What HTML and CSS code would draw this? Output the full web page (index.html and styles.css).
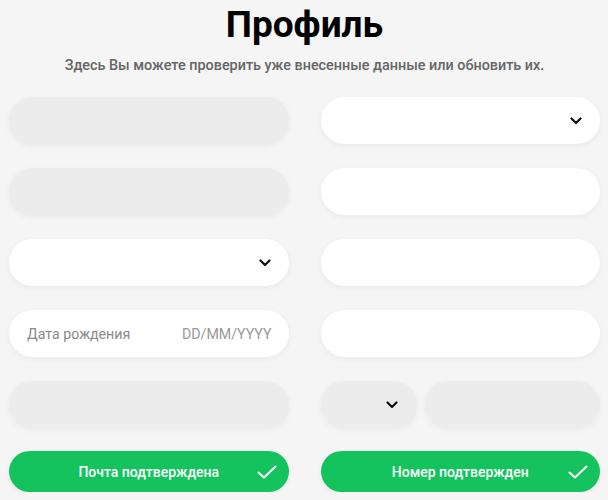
FILE: index.html
```html
<!DOCTYPE html>
<html lang="ru">
<head>
  <meta charset="UTF-8" />
  <meta name="viewport" content="width=device-width, initial-scale=1" />
  <link rel="stylesheet" href="styles.css">
</head>
<body>
  <div class="page">
    <h1 class="title">Профиль</h1>
    <p class="subtitle">Здесь Вы можете проверить уже внесенные данные или обновить их.</p>

    <div class="form-grid">
      <div class="field disabled"></div>
      <div class="field select">
        <svg class="chevron" viewBox="0 0 12 8" width="12" height="8"><path d="M1.5 1.5 L6 6 L10.5 1.5" fill="none" stroke="#111" stroke-width="2.2" stroke-linecap="round" stroke-linejoin="round"/></svg>
      </div>

      <div class="field disabled"></div>
      <div class="field"></div>

      <div class="field select">
        <svg class="chevron" viewBox="0 0 12 8" width="12" height="8"><path d="M1.5 1.5 L6 6 L10.5 1.5" fill="none" stroke="#111" stroke-width="2.2" stroke-linecap="round" stroke-linejoin="round"/></svg>
      </div>
      <div class="field"></div>

      <div class="field date">
        <span class="placeholder">Дата рождения</span>
        <span class="mask">DD/MM/YYYY</span>
      </div>
      <div class="field"></div>

      <div class="field disabled"></div>
      <div class="phone-row">
        <div class="field disabled select code">
          <svg class="chevron" viewBox="0 0 12 8" width="12" height="8"><path d="M1.5 1.5 L6 6 L10.5 1.5" fill="none" stroke="#111" stroke-width="2.2" stroke-linecap="round" stroke-linejoin="round"/></svg>
        </div>
        <div class="field disabled number"></div>
      </div>

      <button class="confirm-btn">
        Почта подтверждена
        <svg class="check" viewBox="0 0 20 14" width="20" height="14"><path d="M1.5 7.5 L7 12.5 L18.5 1.5" fill="none" stroke="#fff" stroke-width="2" stroke-linecap="round" stroke-linejoin="round"/></svg>
      </button>
      <button class="confirm-btn">
        Номер подтвержден
        <svg class="check" viewBox="0 0 20 14" width="20" height="14"><path d="M1.5 7.5 L7 12.5 L18.5 1.5" fill="none" stroke="#fff" stroke-width="2" stroke-linecap="round" stroke-linejoin="round"/></svg>
      </button>
    </div>
  </div>
</body>
</html>
```

FILE: styles.css
```css
html, body {
  margin: 0;
  padding: 0;
  background-color: #f5f5f5;
  font-family: Roboto, "Noto Sans", sans-serif;
  overflow: hidden;
}

.page {
  padding: 3px 8px 0 9px;
}

.title {
  margin: 0;
  font-size: 37px;
  font-weight: 700;
  line-height: 43px;
  color: #000;
  text-align: center;
}

.subtitle {
  margin: 10px 0 0;
  font-size: 14.4px;
  font-weight: 500;
  line-height: 20px;
  color: #666;
  text-align: center;
}

.form-grid {
  display: grid;
  grid-template-columns: 1fr 1fr;
  column-gap: 32px;
  row-gap: 24px;
  margin-top: 21px;
}

.field {
  height: 47px;
  border-radius: 24px;
  background-color: #fff;
  box-shadow: 0 2px 6px rgba(0,0,0,0.05);
  display: flex;
  align-items: center;
  justify-content: flex-end;
  padding: 0 18px;
  box-sizing: border-box;
}

.field.disabled {
  background-color: #ececec;
}

.field.select {
  padding-right: 18px;
}

.chevron {
  display: block;
}

.field.date {
  justify-content: space-between;
  font-size: 14.2px;
  padding: 0 17px 0 18px;
}

.placeholder {
  color: #8a8a8a;
}

.mask {
  color: #999;
}

.phone-row {
  display: flex;
  gap: 8px;
}

.field.code {
  width: 96px;
  flex-shrink: 0;
  padding-right: 19px;
}

.field.number {
  flex-grow: 1;
}

.confirm-btn {
  position: relative;
  height: 41px;
  margin-top: -1px;
  border: none;
  border-radius: 21px;
  background-color: #14c35d;
  color: #fff;
  font-family: Roboto, "Noto Sans", sans-serif;
  font-size: 14px;
  font-weight: 500;
  cursor: pointer;
  box-shadow: 0 2px 5px rgba(0,0,0,0.06);
}

.check {
  position: absolute;
  right: 12px;
  top: 14px;
}
```
